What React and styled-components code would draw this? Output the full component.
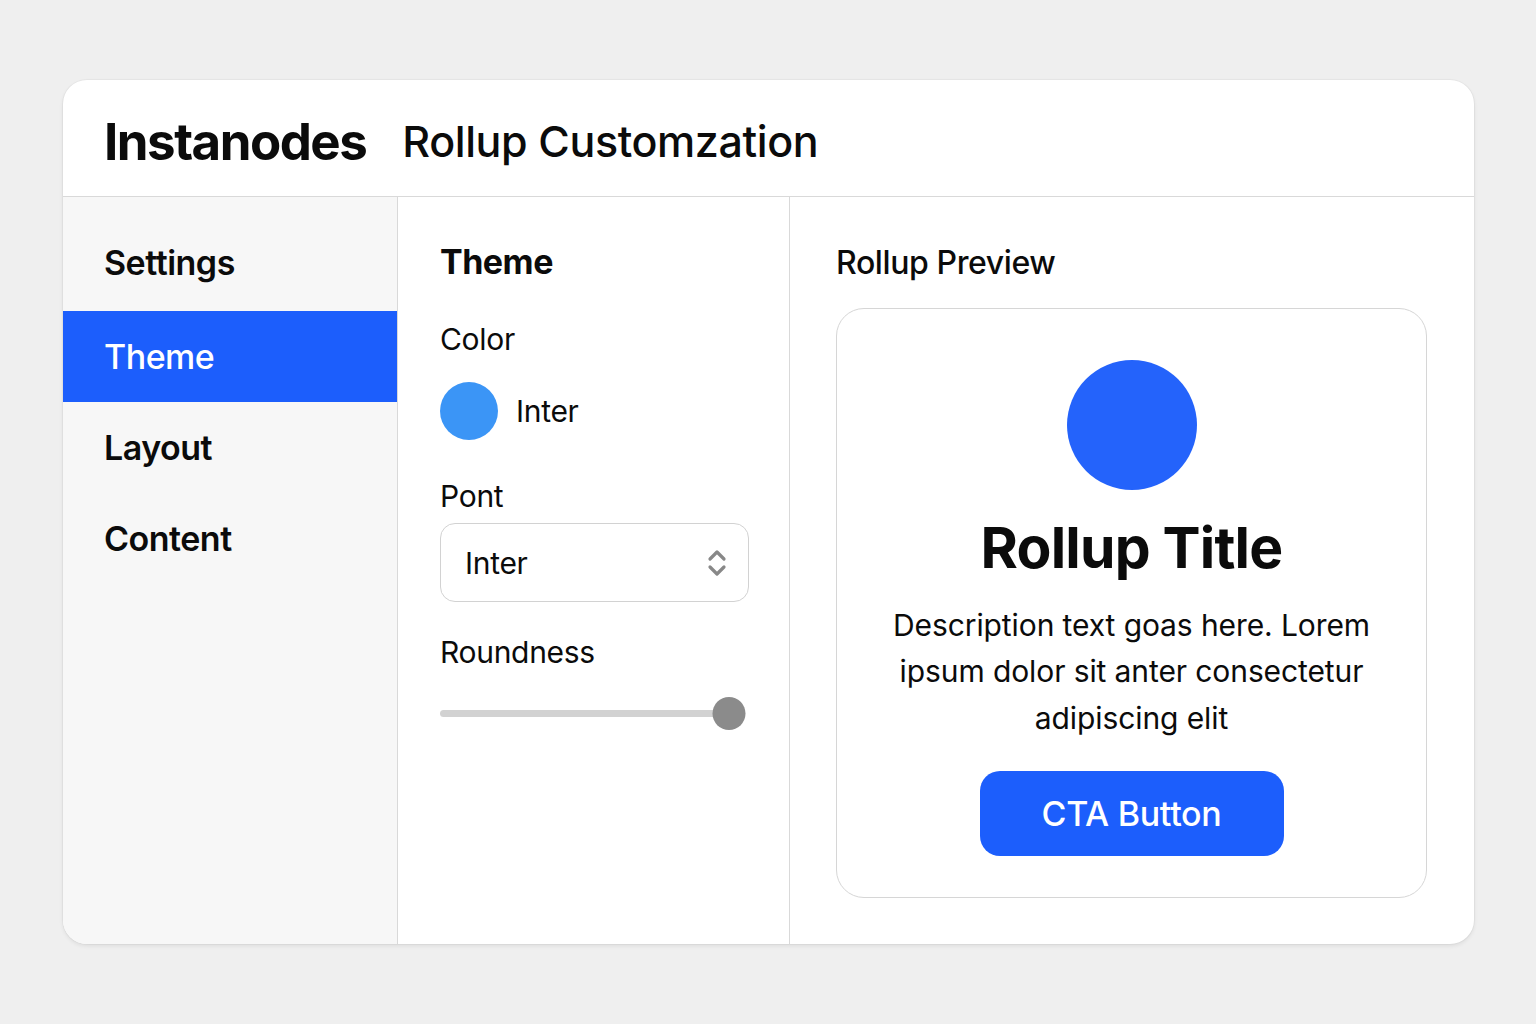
import React, { useState } from 'react'
import styled, { createGlobalStyle } from 'styled-components'

const blue = '#1c5efc'
const border = '#d9d9d9'

const GlobalStyle = createGlobalStyle`
    html, body {
        margin: 0;
        padding: 0;
        background: #efefef;
        font-family: Inter, "Noto Sans", "Liberation Sans", sans-serif;
        color: #0b0b0b;
    }
`

const Page = styled.div`
    width: 1536px;
    height: 1024px;
    box-sizing: border-box;
    padding: 80px 62px 0 63px;
`

const Card = styled.div`
    width: 1411px;
    height: 864px;
    background: #fff;
    border-radius: 24px;
    overflow: hidden;
    display: flex;
    flex-direction: column;
    box-shadow: 0 2px 4px rgba(0, 0, 0, 0.08), 0 0 0 1px rgba(0, 0, 0, 0.03);
`

const Header = styled.header`
    height: 117px;
    flex-shrink: 0;
    display: flex;
    align-items: center;
    gap: 36px;
    padding: 6px 0 0 41px;
    box-sizing: border-box;
    border-bottom: 1.5px solid ${border};
`

const Brand = styled.h1`
    margin: 0;
    font-size: 51px;
    font-weight: 700;
    letter-spacing: -1.5px;
`

const PageTitle = styled.h2`
    margin: 0;
    font-size: 43px;
    font-weight: 500;
    letter-spacing: -0.4px;
`

const Body = styled.div`
    flex: 1;
    display: grid;
    grid-template-columns: 335px 392px 1fr;
`

const Sidebar = styled.nav`
    background: #f7f7f7;
    border-right: 1.5px solid ${border};
    padding-top: 17px;
`

const SideHeading = styled.div`
    height: 97px;
    display: flex;
    align-items: center;
    padding-left: 41px;
    font-size: 34px;
    font-weight: 600;
    letter-spacing: -0.5px;
`

const SideItem = styled.div`
    height: 91px;
    display: flex;
    align-items: center;
    padding-left: 41px;
    font-size: 34px;
    font-weight: ${p => (p.$active ? 500 : 600)};
    letter-spacing: -0.5px;
    background: ${p => (p.$active ? blue : 'transparent')};
    color: ${p => (p.$active ? '#fff' : '#0b0b0b')};
    cursor: pointer;
`

const Panel = styled.section`
    border-right: 1.5px solid ${border};
    padding: 44px 40px 0 42px;
    display: flex;
    flex-direction: column;
`

const PanelTitle = styled.h3`
    margin: 0 0 39px;
    font-size: 34px;
    font-weight: 700;
    letter-spacing: -0.5px;
`

const FieldLabel = styled.div`
    font-size: 30px;
    font-weight: 400;
    letter-spacing: -0.3px;
    margin-bottom: ${p => p.$gap || 12}px;
`

const ColorRow = styled.div`
    display: flex;
    align-items: center;
    gap: 18px;
    margin-bottom: 38px;
    font-size: 30px;
    letter-spacing: -0.3px;
`

const Swatch = styled.div`
    width: 58px;
    height: 58px;
    border-radius: 50%;
    background: #3b95f6;
`

const Select = styled.div`
    height: 79px;
    box-sizing: border-box;
    border: 1.5px solid #d2d2d2;
    border-radius: 15px;
    display: flex;
    align-items: center;
    justify-content: space-between;
    padding: 0 20px 0 24px;
    font-size: 30px;
    letter-spacing: -0.3px;
    margin-bottom: 32px;
`

const Slider = styled.div`
    position: relative;
    height: 34px;
    margin-top: 16px;
    width: 306px;
`

const Track = styled.div`
    position: absolute;
    left: 0;
    right: 17px;
    top: 14px;
    height: 7px;
    border-radius: 4px;
    background: #d2d2d2;
`

const Thumb = styled.div`
    position: absolute;
    top: 1px;
    width: 33px;
    height: 33px;
    border-radius: 50%;
    background: #8b8b8b;
    transform: translateX(-50%);
`

const PreviewPanel = styled.section`
    padding: 46px 47px 0 46px;
    display: flex;
    flex-direction: column;
`

const PreviewTitle = styled.h3`
    margin: 0 0 26px;
    font-size: 32px;
    font-weight: 500;
    letter-spacing: -0.4px;
`

const PreviewCard = styled.div`
    height: 590px;
    box-sizing: border-box;
    border: 1.5px solid #d6d6d6;
    border-radius: 28px;
    display: flex;
    flex-direction: column;
    align-items: center;
    padding-top: 51px;
`

const Logo = styled.div`
    width: 130px;
    height: 130px;
    border-radius: 50%;
    background: #2463fb;
`

const RollupTitle = styled.h1`
    margin: 27px 0 22px;
    font-size: 57px;
    font-weight: 700;
    letter-spacing: -0.8px;
    line-height: 1.1;
`

const Description = styled.p`
    margin: 0;
    width: 500px;
    text-align: center;
    font-size: 30px;
    line-height: 46.5px;
    letter-spacing: -0.1px;
`

const CtaButton = styled.button`
    margin-top: 30px;
    width: 304px;
    height: 85px;
    border: none;
    border-radius: 20px;
    background: ${blue};
    color: #fff;
    font-family: inherit;
    font-size: 34px;
    font-weight: 500;
    letter-spacing: -0.3px;
    cursor: pointer;
`

function Chevrons() {
    return (
        <svg width="22" height="30" viewBox="0 0 22 30" fill="none" stroke="#888" strokeWidth="3.2" strokeLinecap="round" strokeLinejoin="round">
            <path d="M4 11 L11 4 L18 11" />
            <path d="M4 19 L11 26 L18 19" />
        </svg>
    )
}

export default function App() {
    const [active, setActive] = useState('Theme')
    const roundness = 100
    return (
        <>
            <GlobalStyle />
            <Page>
                <Card>
                    <Header>
                        <Brand>Instanodes</Brand>
                        <PageTitle>Rollup Customzation</PageTitle>
                    </Header>
                    <Body>
                        <Sidebar>
                            <SideHeading>Settings</SideHeading>
                            {['Theme', 'Layout', 'Content'].map(item => (
                                <SideItem key={item} $active={active === item} onClick={() => setActive(item)}>
                                    {item}
                                </SideItem>
                            ))}
                        </Sidebar>
                        <Panel>
                            <PanelTitle>Theme</PanelTitle>
                            <FieldLabel $gap={25}>Color</FieldLabel>
                            <ColorRow>
                                <Swatch />
                                Inter
                            </ColorRow>
                            <FieldLabel $gap={9}>Pont</FieldLabel>
                            <Select>
                                Inter
                                <Chevrons />
                            </Select>
                            <FieldLabel $gap={10}>Roundness</FieldLabel>
                            <Slider>
                                <Track />
                                <Thumb style={{ left: `${(roundness / 100) * 289}px` }} />
                            </Slider>
                        </Panel>
                        <PreviewPanel>
                            <PreviewTitle>Rollup Preview</PreviewTitle>
                            <PreviewCard>
                                <Logo />
                                <RollupTitle>Rollup Title</RollupTitle>
                                <Description>
                                    Description text goas here. Lorem ipsum dolor sit anter consectetur adipiscing elit
                                </Description>
                                <CtaButton>CTA Button</CtaButton>
                            </PreviewCard>
                        </PreviewPanel>
                    </Body>
                </Card>
            </Page>
        </>
    )
}
